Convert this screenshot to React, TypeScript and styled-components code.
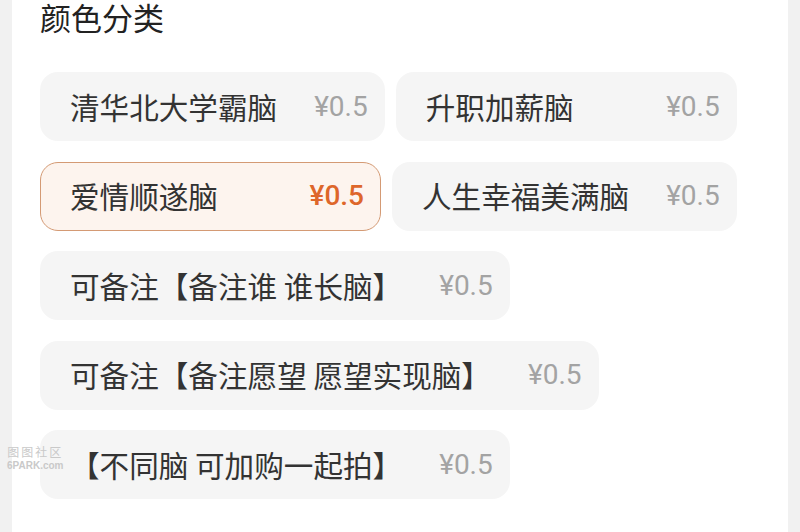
import React from 'react';
import styled, { createGlobalStyle, css } from 'styled-components';

type Option = {
  label: string;
  price: string;
  selected?: boolean;
};

const options: Option[] = [
  { label: '清华北大学霸脑', price: '¥0.5' },
  { label: '升职加薪脑', price: '¥0.5' },
  { label: '爱情顺遂脑', price: '¥0.5', selected: true },
  { label: '人生幸福美满脑', price: '¥0.5' },
  { label: '可备注【备注谁 谁长脑】', price: '¥0.5' },
  { label: '可备注【备注愿望 愿望实现脑】', price: '¥0.5' },
  { label: '【不同脑 可加购一起拍】', price: '¥0.5' },
];

const App: React.FC = () => {
  return (
    <>
      <GlobalStyle />
      <Page>
        <SideStrip />
        <Panel>
          <Title>颜色分类</Title>
          <OptionList>
            {options.map((opt) => (
              <Chip key={opt.label} $selected={opt.selected}>
                <ChipLabel>{opt.label}</ChipLabel>
                <ChipPrice $selected={opt.selected}>{opt.price}</ChipPrice>
              </Chip>
            ))}
          </OptionList>
        </Panel>
        <SideStrip />
        <Watermark>
          <span>图图社区</span>
          <small>6PARK.com</small>
        </Watermark>
      </Page>
    </>
  );
};

const GlobalStyle = createGlobalStyle`
  html, body {
    margin: 0;
    padding: 0;
    background: #ffffff;
  }
  body {
    font-family: "Noto Sans CJK SC", "Noto Sans", sans-serif;
  }
`;

const Page = styled.div`
  position: relative;
  display: flex;
  width: 800px;
  height: 532px;
  overflow: hidden;
  background: #ffffff;
`;

const SideStrip = styled.div`
  width: 12px;
  flex-shrink: 0;
  background: #f1f1f1;
`;

const Panel = styled.div`
  flex: 1;
  padding: 0 0 0 28px;
  background: #ffffff;
`;

const Title = styled.div`
  font-size: 31px;
  line-height: 34px;
  color: #222222;
`;

const OptionList = styled.div`
  display: flex;
  flex-wrap: wrap;
  align-items: flex-start;
  column-gap: 11px;
  row-gap: 20.5px;
  margin-top: 38px;
  width: 716px;
`;

const Chip = styled.div<{ $selected?: boolean }>`
  box-sizing: border-box;
  display: flex;
  align-items: center;
  justify-content: space-between;
  gap: 37px;
  min-width: 341px;
  height: 69px;
  padding: 0 16px 0 29px;
  border-radius: 18px;
  background: #f5f5f5;
  border: 1.5px solid transparent;

  ${({ $selected }) =>
    $selected &&
    css`
      background: #fdf4ee;
      border-color: #d49a74;
    `}
`;

const ChipLabel = styled.span`
  font-size: 29.6px;
  line-height: 1;
  color: #333333;
  white-space: nowrap;
`;

const ChipPrice = styled.span<{ $selected?: boolean }>`
  font-family: Roboto, "Noto Sans", sans-serif;
  font-size: 28px;
  line-height: 1;
  color: #a3a3a3;
  white-space: nowrap;

  ${({ $selected }) =>
    $selected &&
    css`
      color: #de662a;
      font-weight: 500;
    `}
`;

const Watermark = styled.div`
  position: absolute;
  left: 7px;
  top: 446px;
  display: flex;
  flex-direction: column;
  align-items: center;
  color: #c9c9c9;
  line-height: 1;

  span {
    font-size: 12px;
    letter-spacing: 2px;
  }

  small {
    font-family: "Liberation Sans", sans-serif;
    font-size: 10px;
    font-weight: bold;
    margin-top: 3px;
  }
`;

export default App;
